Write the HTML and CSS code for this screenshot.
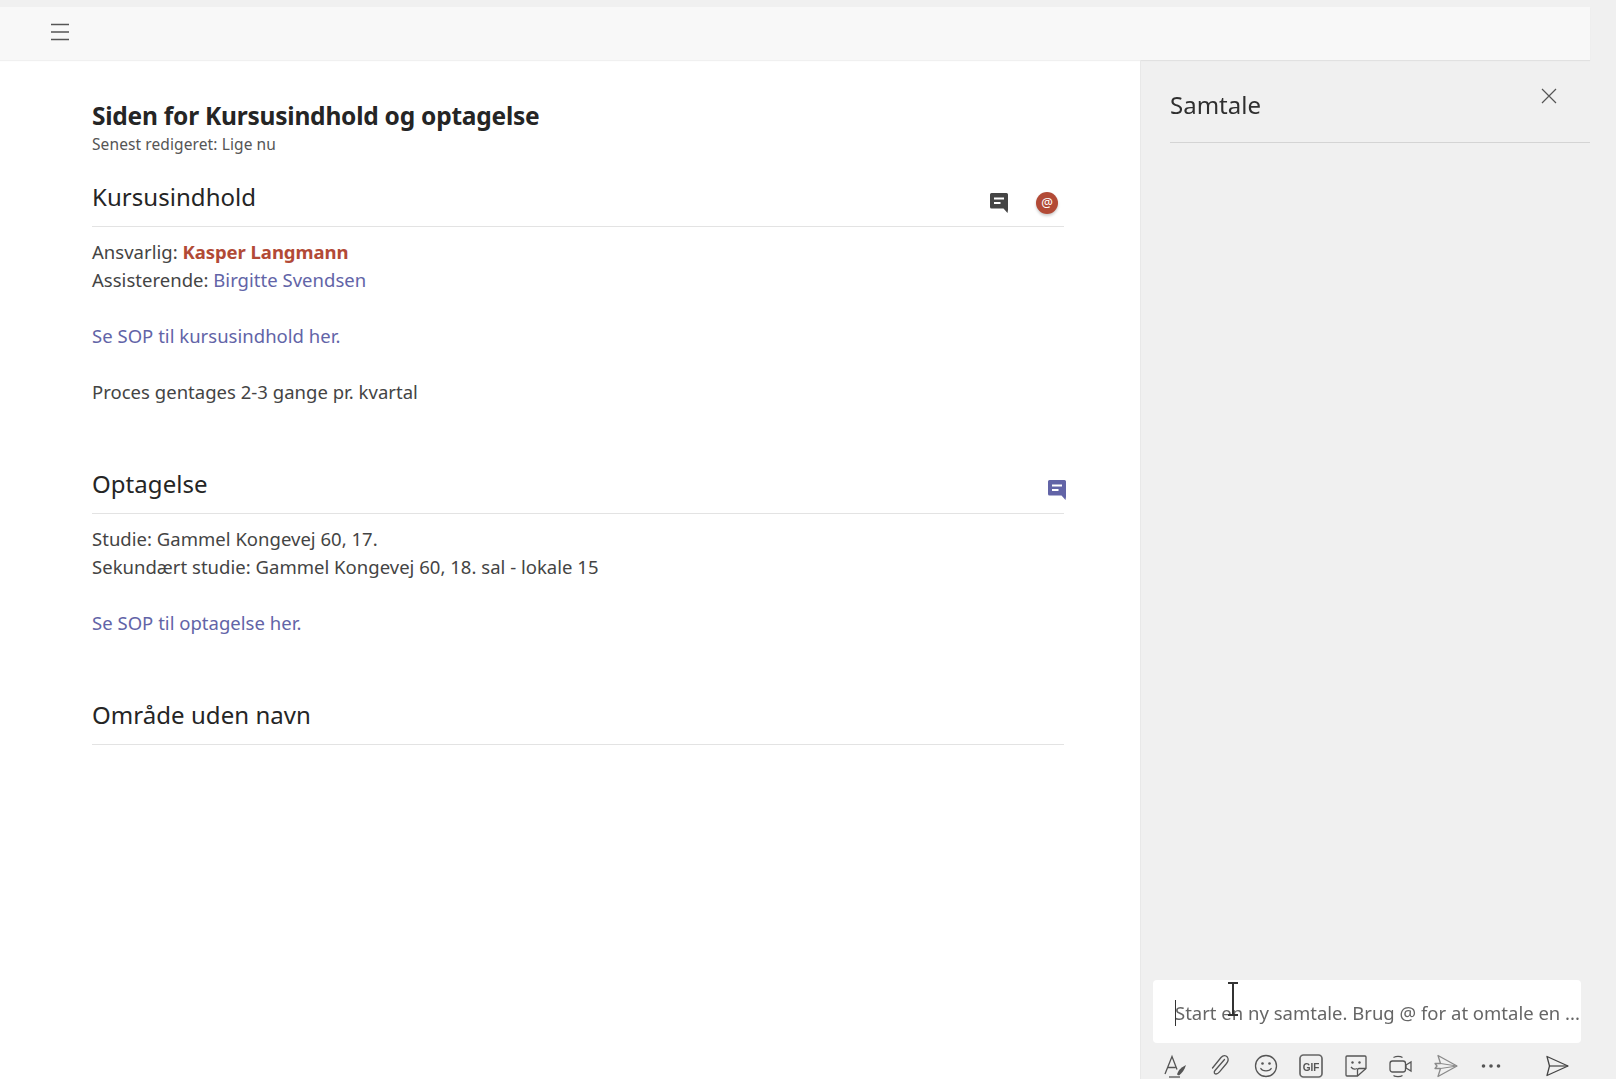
FILE: index.html
```html
<!DOCTYPE html>
<html lang="da">
<head>
<meta charset="utf-8">
<title>Siden for Kursusindhold og optagelse</title>
<link rel="stylesheet" href="styles.css">
</head>
<body>
<div class="app">
  <header class="topbar">
    <svg class="menu-icon" viewBox="0 0 20 18" width="20" height="18"><path d="M1 1.500h18M1 9h18M1 16.500h18" fill="none" stroke="#555" stroke-width="1.300"/></svg>
  </header>
  <div class="workspace">
    <main class="page">
      <h1 class="page-title">Siden for Kursusindhold og optagelse</h1>
      <p class="page-meta">Senest redigeret: Lige nu</p>

      <section class="section section-first">
        <div class="section-head">
          <h2 class="section-title">Kursusindhold</h2>
          <div class="section-icons">
            <svg class="comment-icon comment-dark" viewBox="0 0 20 21" width="20" height="21"><path d="M2.500 1h15A1.500 1.500 0 0 1 19 2.500v15.500l-.5 3-4-4.500H2.500A1.500 1.500 0 0 1 1 15V2.500A1.500 1.500 0 0 1 2.500 1z" fill="currentColor"/><path d="M5 6.500h10M5 11h6.500" stroke="#fff" stroke-width="1.800"/></svg>
            <span class="mention-badge">@</span>
          </div>
        </div>
        <div class="section-body">
          <div>Ansvarlig: <strong class="mention">Kasper Langmann</strong></div>
          <div>Assisterende: <a class="link">Birgitte Svendsen</a></div>
          <div class="gap"><a class="link">Se SOP til kursusindhold her.</a></div>
          <div class="gap">Proces gentages 2-3 gange pr. kvartal</div>
        </div>
      </section>

      <section class="section section-second">
        <div class="section-head">
          <h2 class="section-title">Optagelse</h2>
          <div class="section-icons section-icons-end">
            <svg class="comment-icon comment-purple" viewBox="0 0 20 21" width="20" height="21"><path d="M2.500 1h15A1.500 1.500 0 0 1 19 2.500v15.500l-.5 3-4-4.500H2.500A1.500 1.500 0 0 1 1 15V2.500A1.500 1.500 0 0 1 2.500 1z" fill="currentColor"/><path d="M5 6.500h10M5 11h6.500" stroke="#fff" stroke-width="1.800"/></svg>
          </div>
        </div>
        <div class="section-body">
          <div>Studie: Gammel Kongevej 60, 17.</div>
          <div>Sekundært studie: Gammel Kongevej 60, 18. sal - lokale 15</div>
          <div class="gap"><a class="link">Se SOP til optagelse her.</a></div>
        </div>
      </section>

      <section class="section section-third">
        <div class="section-head">
          <h2 class="section-title">Område uden navn</h2>
        </div>
      </section>
    </main>

    <aside class="panel">
      <div class="panel-head">
        <h2 class="panel-title">Samtale</h2>
        <svg class="close-icon" viewBox="0 0 16 16" width="16" height="16"><path d="M1 1l14 14M15 1L1 15" fill="none" stroke="#555" stroke-width="1.200"/></svg>
      </div>
      <div class="panel-spacer"></div>
      <div class="composer">
        <span class="caret"></span>
        <span class="placeholder">Start en ny samtale. Brug @ for at omtale en ...</span>
        <svg class="ibeam" viewBox="0 0 14 34" width="14" height="34"><path d="M2 1h10M2 33h10M7 1v32" fill="none" stroke="#333" stroke-width="2"/></svg>
      </div>
      <div class="toolbar">
        <svg viewBox="0 0 24 24" width="24" height="24" class="tool"><path d="M1 20L8 2.500 13 15.500M3.500 13.500h8" fill="none" stroke="#555" stroke-width="1.300"/><path d="M13 20.500c1-3.500 3-6.500 9-9.500-1.500 5-4 8-7 10.500z" fill="#555"/><path d="M5 23h11" stroke="#555" stroke-width="1.300"/></svg>
        <svg viewBox="0 0 24 24" width="24" height="24" class="tool"><path d="M17.500 6.500L8 17.500c-1.500 1.800-.5 3.500 1 3.500 1.500 0 2.300-.8 3.500-2.200l7-8.300c2-2.500 2.200-4.500.8-6.500-1.500-1.800-4-2-6.300.5L5.500 15" transform="translate(-2 -1)" fill="none" stroke="#555" stroke-width="1.300" stroke-linecap="round"/></svg>
        <svg viewBox="0 0 24 24" width="24" height="24" class="tool"><circle cx="12" cy="12" r="10.500" fill="none" stroke="#555" stroke-width="1.300"/><circle cx="8.500" cy="9.500" r="1.300" fill="#555"/><circle cx="15.500" cy="9.500" r="1.300" fill="#555"/><path d="M6.800 14.500c1.500 3.200 8.900 3.200 10.400 0" fill="none" stroke="#555" stroke-width="1.300" stroke-linecap="round"/></svg>
        <svg viewBox="0 0 24 24" width="24" height="24" class="tool"><rect x="1" y="1" width="22" height="22" rx="3.500" fill="none" stroke="#666" stroke-width="1.700"/><text x="12" y="16.500" class="gif-text">GIF</text></svg>
        <svg viewBox="0 0 24 24" width="24" height="24" class="tool"><path d="M3 2h18a1 1 0 0 1 1 1v11.500L13.500 22H3a1 1 0 0 1-1-1V3a1 1 0 0 1 1-1z" fill="none" stroke="#555" stroke-width="1.300"/><path d="M22 14.500h-7a1.500 1.500 0 0 0-1.500 1.500v6" fill="none" stroke="#555" stroke-width="1.300"/><circle cx="8.500" cy="8.500" r="1.200" fill="#555"/><circle cx="15.500" cy="8.500" r="1.200" fill="#555"/><path d="M7 13c1.500 2 4 2.500 6 1.500" fill="none" stroke="#555" stroke-width="1.300"/></svg>
        <svg viewBox="0 0 24 24" width="24" height="24" class="tool"><rect x="1" y="7" width="15.500" height="11" rx="2.500" fill="none" stroke="#555" stroke-width="1.300"/><path d="M17 11l5-3v9l-5-3z" fill="none" stroke="#555" stroke-width="1.300"/><path d="M4.500 3.500c2-1.500 7-1.500 9 0M4.500 21.500c2 1.500 7 1.500 9 0" fill="none" stroke="#555" stroke-width="1.200"/></svg>
        <svg viewBox="0 0 24 24" width="24" height="24" class="tool"><path d="M4 1.500L23 12 4 22.500l2.500-8H1l2-2.500-2-2.500h5.500z" fill="none" stroke="#8a8a8a" stroke-width="1.300" stroke-linejoin="round"/><path d="M6.500 9.500L23 12 6.500 14.500" fill="none" stroke="#8a8a8a" stroke-width="1"/></svg>
        <svg viewBox="0 0 24 24" width="24" height="24" class="tool"><circle cx="4.500" cy="12" r="1.800" fill="#555"/><circle cx="12" cy="12" r="1.800" fill="#555"/><circle cx="19.500" cy="12" r="1.800" fill="#555"/></svg>
        <svg viewBox="0 0 24 24" width="24" height="24" class="tool tool-send"><path d="M2 2.500L23 12 2 21.500l2.500-9.500z" fill="none" stroke="#444" stroke-width="1.300" stroke-linejoin="round"/><path d="M4.500 12H23" stroke="#444" stroke-width="1.200"/></svg>
      </div>
    </aside>
  </div>
</div>
</body>
</html>
```

FILE: styles.css
```css
* { box-sizing: border-box; }
html, body { margin: 0; height: 100%; overflow: hidden; }
body {
  background: #f0f0f0;
  color: #333;
  font-family: "Noto Sans", "Open Sans", sans-serif;
}
.app {
  width: 1590px;
  height: 1079px;
  padding-top: 7px;
  display: flex;
  flex-direction: column;
  filter: blur(.35px);
}
.topbar {
  height: 53px;
  flex: none;
  background: #f8f8f8;
  display: flex;
  align-items: center;
  padding: 0 0 4px 50px;
  box-shadow: 0 1px 1px rgba(0,0,0,.06);
  position: relative;
}
.workspace { flex: 1; display: flex; min-height: 0; }
.page {
  width: 1140px;
  flex: none;
  background: #fff;
  padding: 39px 76px 0 92px;
}
.page-title {
  margin: 0;
  font-size: 24.500px;
  line-height: 34px;
  font-weight: 700;
  color: #252525;
  letter-spacing: -.23px;
}
.page-meta {
  margin: 1px 0 0;
  font-size: 15.500px;
  line-height: 20px;
  letter-spacing: .1px;
  color: #555;
}
.section-first { margin-top: 22px; }
.section-second { margin-top: 57px; }
.section-third { margin-top: 57px; }
.section-head {
  display: flex;
  align-items: center;
  justify-content: space-between;
  height: 51px;
  border-bottom: 1px solid #e3e3e3;
  padding-bottom: 9px;
}
.section-title {
  margin: 0;
  font-size: 24px;
  line-height: 34px;
  font-weight: 400;
  color: #252525;
  letter-spacing: .05px;
}
.section-icons { display: flex; align-items: center; gap: 27px; padding-top: 12px; margin-right: 6px; }
.section-icons-end { margin-right: -3px; }
.comment-dark { color: #444; }
.comment-purple { color: #6264a7; }
.comment-icon { display: block; }
.mention-badge {
  width: 22px;
  height: 22px;
  border-radius: 50%;
  background: #b24a36;
  color: #fff;
  font-size: 13px;
  line-height: 20px;
  text-align: center;
  box-shadow: 0 2px 3px rgba(0,0,0,.2);
}
.section-body {
  padding-top: 11px;
  font-size: 18.500px;
  line-height: 28px;
  color: #444;
  letter-spacing: .02px;
}
.gap { margin-top: 28px; }
.mention { color: #b24a36; font-weight: 700; letter-spacing: -.05px; }
.link { color: #6264a7; }
.panel {
  flex: 1;
  border-left: 1px solid #e8e8e8;
  display: flex;
  flex-direction: column;
  padding-left: 12px;
  position: relative;
}
.panel-head {
  margin-left: 17px;
  height: 83px;
  border-bottom: 1px solid #d4d4d4;
  display: flex;
  justify-content: space-between;
  align-items: flex-start;
  padding-top: 27px;
  padding-right: 33px;
}
.panel-title {
  margin: 0;
  font-size: 24px;
  line-height: 36px;
  font-weight: 400;
  color: #2f2f2f;
}
.close-icon { margin-top: 1px; }
.panel-spacer { flex: 1; }
.composer {
  position: relative;
  width: 428px;
  height: 63px;
  background: #fff;
  border-radius: 4px;
  display: flex;
  align-items: center;
  padding-left: 22px;
}
.placeholder {
  font-size: 18.500px;
  line-height: 28px;
  color: #666;
  white-space: nowrap;
  padding-top: 3px;
}
.caret {
  position: absolute;
  left: 22px;
  top: 20px;
  width: 1px;
  height: 26px;
  background: #333;
}
.ibeam { position: absolute; left: 73px; top: 2px; }
.toolbar {
  height: 36px;
  display: flex;
  align-items: center;
  gap: 21px;
  padding: 10px 0 0 11px;
}
.tool { display: block; flex: none; }
.tool-send { margin-left: 21px; }
.gif-text {
  font-family: "Liberation Sans Narrow", "Liberation Sans", sans-serif;
  font-size: 10px;
  font-weight: 700;
  fill: #555;
  text-anchor: middle;
}
```
